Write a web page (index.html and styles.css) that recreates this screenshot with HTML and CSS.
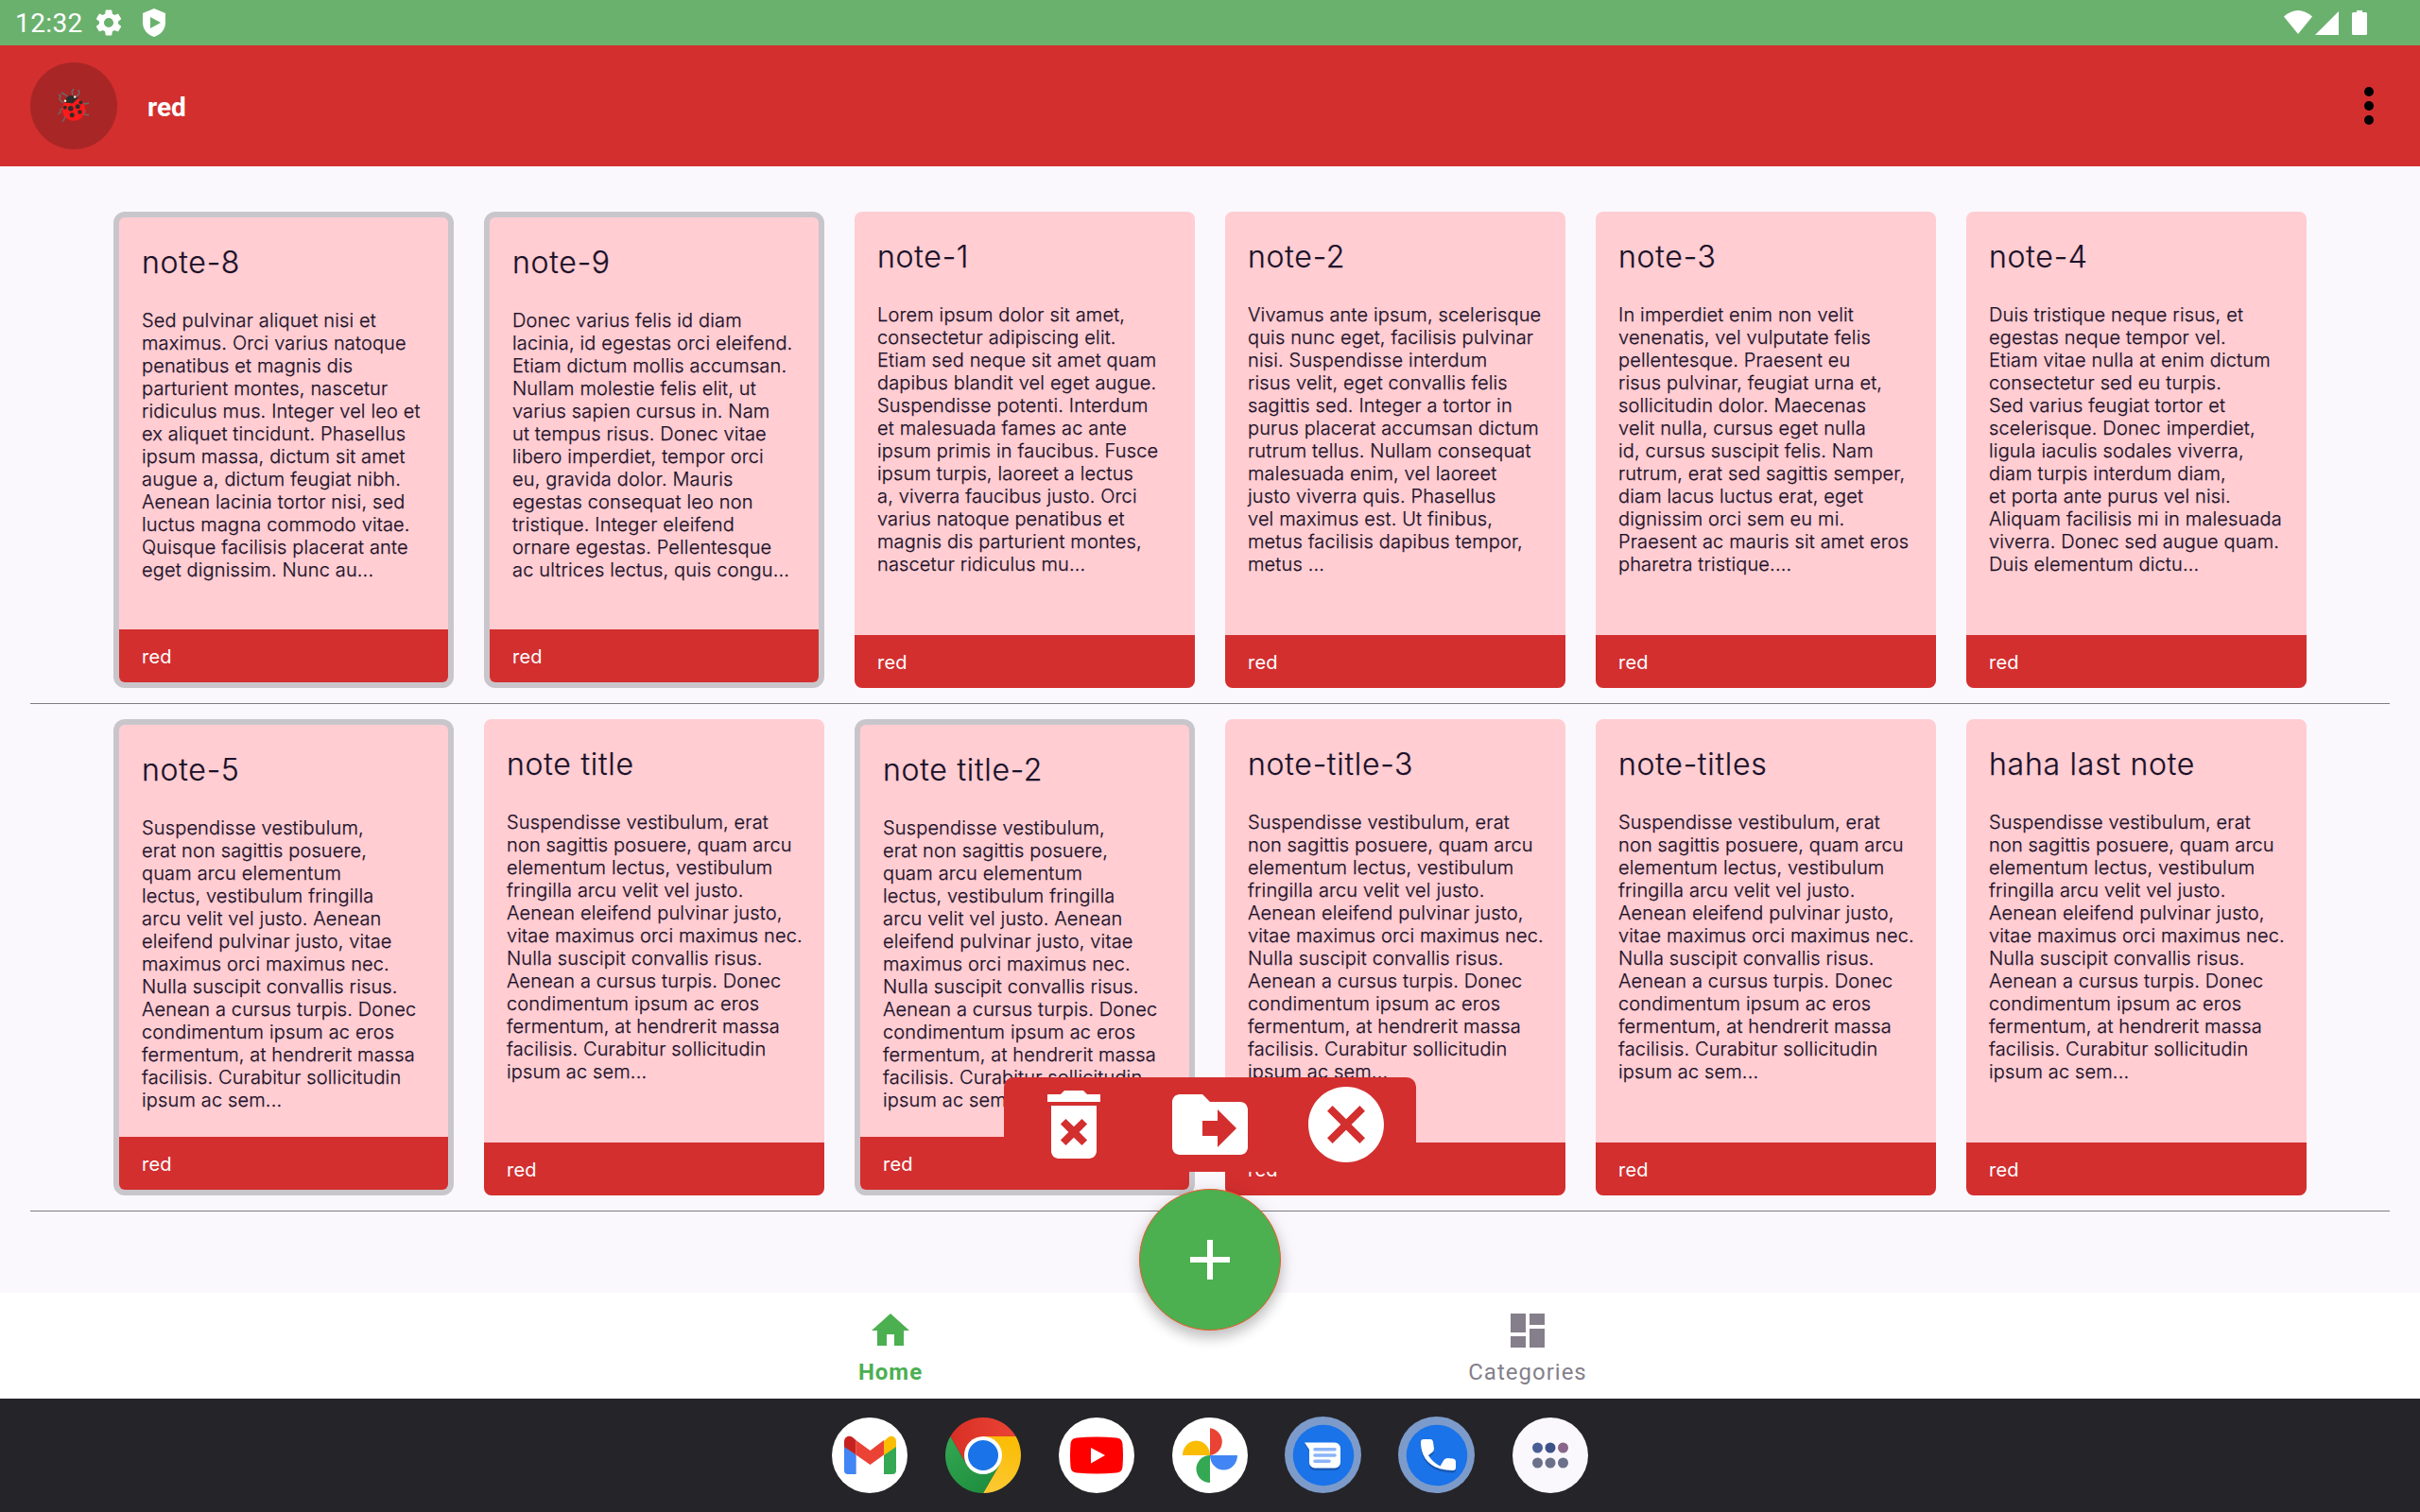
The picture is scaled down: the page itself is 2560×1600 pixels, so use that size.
FILE: index.html
```html
<!DOCTYPE html>
<html lang="en">
<head>
<meta charset="utf-8">
<title>Notes</title>
<link rel="stylesheet" href="styles.css">
</head>
<body>
<div class="screen">
  <div class="status">
    <span class="clock">12:32</span>
    <svg class="gear" viewBox="2 2 20 20"><path d="M19.14 12.94c.04-.3.06-.61.06-.94 0-.32-.02-.64-.07-.94l2.03-1.58a.49.49 0 0 0 .12-.61l-1.92-3.32a.49.49 0 0 0-.59-.22l-2.39.96c-.5-.38-1.03-.7-1.62-.94l-.36-2.54a.48.48 0 0 0-.48-.41h-3.84a.47.47 0 0 0-.47.41l-.36 2.54c-.59.24-1.13.57-1.62.94l-2.39-.96a.48.48 0 0 0-.59.22L2.74 8.87c-.12.21-.08.47.12.61l2.03 1.58c-.05.3-.09.63-.09.94s.02.64.07.94l-2.03 1.58a.49.49 0 0 0-.12.61l1.92 3.32c.12.22.37.29.59.22l2.39-.96c.5.38 1.03.7 1.62.94l.36 2.54c.05.24.24.41.48.41h3.84c.24 0 .44-.17.47-.41l.36-2.54c.59-.24 1.13-.56 1.62-.94l2.39.96c.22.08.47 0 .59-.22l1.92-3.32a.47.47 0 0 0-.12-.61zM12 15.6A3.6 3.6 0 1 1 12 8.4a3.6 3.6 0 0 1 0 7.2z"/></svg>
    <svg class="shield" viewBox="0 0 26 30"><path fill-rule="evenodd" d="M13 0 25 5v10c0 7-5 13-12 15C6 28 1 22 1 15V5zM9 9v12l11-6z"/></svg>
    <span class="spacer"></span>
    <svg class="wifi" viewBox="0 0 30 25"><path d="M0 6.500Q15-6.500 30 6.500L15 25z"/></svg>
    <svg class="signal" viewBox="0 0 25 25"><path d="M0 25 25 0v25z"/></svg>
    <svg class="battery" viewBox="0 0 16 26"><path d="M5 0h6v2h3.500a1.500 1.500 0 0 1 1.500 1.500v21a1.500 1.500 0 0 1-1.500 1.500h-13A1.500 1.500 0 0 1 0 24.500v-21A1.500 1.500 0 0 1 1.500 2H5z"/></svg>
  </div>
  <header class="appbar">
    <div class="avatar">
      <svg viewBox="0 0 34 36"><g fill="none" stroke="#6b6b6b" stroke-width="1.400"><path d="M11 9 8 6 4 4M16 7l-1-4 2-3M20 8l3-3-1-4M6 15l-4-4 1-4-2-1M6 20l-3 2v3l-3 2M7 26l1 4-3 5M26 15l3 1 4-1M27 20l2 3-1 4 5 1"/></g><circle cx="17" cy="21.800" r="12" fill="#ff1a1a"/><path d="M7.500 14.500C8 9 11 7 14.500 7c3.500 0 5.500 1 7 3l-5.500 5.500z" fill="#302b2b"/><g fill="#302b2b"><circle cx="7.800" cy="19.800" r="2"/><circle cx="13.800" cy="20.800" r="2.800"/><circle cx="21.200" cy="18.800" r="2.500"/><circle cx="24.400" cy="14.500" r="2"/><circle cx="15.200" cy="27.800" r="2.500"/><circle cx="23.500" cy="24.500" r="2.200"/></g><circle cx="8" cy="12.800" r="1.300" fill="#ffe9c9"/><circle cx="18.200" cy="8.500" r="1.300" fill="#ffe9c9"/></svg>
    </div>
    <h1>red</h1>
    <span class="spacer"></span>
    <div class="more"><i></i><i></i><i></i></div>
  </header>
  <main>
    <div class="row">
      <article class="card sel"><h2>note-8</h2><p>Sed pulvinar aliquet nisi et<br>maximus. Orci varius natoque<br>penatibus et magnis dis<br>parturient montes, nascetur<br>ridiculus mus. Integer vel leo et<br>ex aliquet tincidunt. Phasellus<br>ipsum massa, dictum sit amet<br>augue a, dictum feugiat nibh.<br>Aenean lacinia tortor nisi, sed<br>luctus magna commodo vitae.<br>Quisque facilisis placerat ante<br>eget dignissim. Nunc au...</p><footer>red</footer></article>
      <article class="card sel"><h2>note-9</h2><p>Donec varius felis id diam<br>lacinia, id egestas orci eleifend.<br>Etiam dictum mollis accumsan.<br>Nullam molestie felis elit, ut<br>varius sapien cursus in. Nam<br>ut tempus risus. Donec vitae<br>libero imperdiet, tempor orci<br>eu, gravida dolor. Mauris<br>egestas consequat leo non<br>tristique. Integer eleifend<br>ornare egestas. Pellentesque<br>ac ultrices lectus, quis congu...</p><footer>red</footer></article>
      <article class="card"><h2>note-1</h2><p>Lorem ipsum dolor sit amet,<br>consectetur adipiscing elit.<br>Etiam sed neque sit amet quam<br>dapibus blandit vel eget augue.<br>Suspendisse potenti. Interdum<br>et malesuada fames ac ante<br>ipsum primis in faucibus. Fusce<br>ipsum turpis, laoreet a lectus<br>a, viverra faucibus justo. Orci<br>varius natoque penatibus et<br>magnis dis parturient montes,<br>nascetur ridiculus mu...</p><footer>red</footer></article>
      <article class="card"><h2>note-2</h2><p>Vivamus ante ipsum, scelerisque<br>quis nunc eget, facilisis pulvinar<br>nisi. Suspendisse interdum<br>risus velit, eget convallis felis<br>sagittis sed. Integer a tortor in<br>purus placerat accumsan dictum<br>rutrum tellus. Nullam consequat<br>malesuada enim, vel laoreet<br>justo viverra quis. Phasellus<br>vel maximus est. Ut finibus,<br>metus facilisis dapibus tempor,<br>metus ...</p><footer>red</footer></article>
      <article class="card"><h2>note-3</h2><p>In imperdiet enim non velit<br>venenatis, vel vulputate felis<br>pellentesque. Praesent eu<br>risus pulvinar, feugiat urna et,<br>sollicitudin dolor. Maecenas<br>velit nulla, cursus eget nulla<br>id, cursus suscipit felis. Nam<br>rutrum, erat sed sagittis semper,<br>diam lacus luctus erat, eget<br>dignissim orci sem eu mi.<br>Praesent ac mauris sit amet eros<br>pharetra tristique....</p><footer>red</footer></article>
      <article class="card"><h2>note-4</h2><p>Duis tristique neque risus, et<br>egestas neque tempor vel.<br>Etiam vitae nulla at enim dictum<br>consectetur sed eu turpis.<br>Sed varius feugiat tortor et<br>scelerisque. Donec imperdiet,<br>ligula iaculis sodales viverra,<br>diam turpis interdum diam,<br>et porta ante purus vel nisi.<br>Aliquam facilisis mi in malesuada<br>viverra. Donec sed augue quam.<br>Duis elementum dictu...</p><footer>red</footer></article>
    </div>
    <div class="row">
      <article class="card sel"><h2>note-5</h2><p>Suspendisse vestibulum,<br>erat non sagittis posuere,<br>quam arcu elementum<br>lectus, vestibulum fringilla<br>arcu velit vel justo. Aenean<br>eleifend pulvinar justo, vitae<br>maximus orci maximus nec.<br>Nulla suscipit convallis risus.<br>Aenean a cursus turpis. Donec<br>condimentum ipsum ac eros<br>fermentum, at hendrerit massa<br>facilisis. Curabitur sollicitudin<br>ipsum ac sem...</p><footer>red</footer></article>
      <article class="card"><h2>note title</h2><p>Suspendisse vestibulum, erat<br>non sagittis posuere, quam arcu<br>elementum lectus, vestibulum<br>fringilla arcu velit vel justo.<br>Aenean eleifend pulvinar justo,<br>vitae maximus orci maximus nec.<br>Nulla suscipit convallis risus.<br>Aenean a cursus turpis. Donec<br>condimentum ipsum ac eros<br>fermentum, at hendrerit massa<br>facilisis. Curabitur sollicitudin<br>ipsum ac sem...</p><footer>red</footer></article>
      <article class="card sel"><h2>note title-2</h2><p>Suspendisse vestibulum,<br>erat non sagittis posuere,<br>quam arcu elementum<br>lectus, vestibulum fringilla<br>arcu velit vel justo. Aenean<br>eleifend pulvinar justo, vitae<br>maximus orci maximus nec.<br>Nulla suscipit convallis risus.<br>Aenean a cursus turpis. Donec<br>condimentum ipsum ac eros<br>fermentum, at hendrerit massa<br>facilisis. Curabitur sollicitudin<br>ipsum ac sem...</p><footer>red</footer></article>
      <article class="card"><h2>note-title-3</h2><p>Suspendisse vestibulum, erat<br>non sagittis posuere, quam arcu<br>elementum lectus, vestibulum<br>fringilla arcu velit vel justo.<br>Aenean eleifend pulvinar justo,<br>vitae maximus orci maximus nec.<br>Nulla suscipit convallis risus.<br>Aenean a cursus turpis. Donec<br>condimentum ipsum ac eros<br>fermentum, at hendrerit massa<br>facilisis. Curabitur sollicitudin<br>ipsum ac sem...</p><footer>red</footer></article>
      <article class="card"><h2>note-titles</h2><p>Suspendisse vestibulum, erat<br>non sagittis posuere, quam arcu<br>elementum lectus, vestibulum<br>fringilla arcu velit vel justo.<br>Aenean eleifend pulvinar justo,<br>vitae maximus orci maximus nec.<br>Nulla suscipit convallis risus.<br>Aenean a cursus turpis. Donec<br>condimentum ipsum ac eros<br>fermentum, at hendrerit massa<br>facilisis. Curabitur sollicitudin<br>ipsum ac sem...</p><footer>red</footer></article>
      <article class="card"><h2>haha last note</h2><p>Suspendisse vestibulum, erat<br>non sagittis posuere, quam arcu<br>elementum lectus, vestibulum<br>fringilla arcu velit vel justo.<br>Aenean eleifend pulvinar justo,<br>vitae maximus orci maximus nec.<br>Nulla suscipit convallis risus.<br>Aenean a cursus turpis. Donec<br>condimentum ipsum ac eros<br>fermentum, at hendrerit massa<br>facilisis. Curabitur sollicitudin<br>ipsum ac sem...</p><footer>red</footer></article>
    </div>
  </main>
  <nav class="tabs">
    <a class="tab active"><svg viewBox="0 0 24 24"><path d="M10 20v-6h4v6h5v-8h3L12 3 2 12h3v8z"/></svg><span>Home</span></a>
    <a class="tab"><svg viewBox="0 0 24 24"><path d="M3 13h8V3H3v10zm0 8h8v-6H3v6zm10 0h8V11h-8v10zm0-18v6h8V3h-8z"/></svg><span>Categories</span></a>
  </nav>
  <div class="dock">
    <svg viewBox="0 0 80 80"><circle cx="40" cy="40" r="40" fill="#fff"/><path d="M13 30l12.700 9.500V60H17a4 4 0 0 1-4-4z" fill="#4285f4"/><path d="M68 30l-13 9.500V60h9a4 4 0 0 0 4-4z" fill="#34a853"/><path d="M55 25l4-3.500c4-3.500 9-1 9 4V31l-13 9z" fill="#fbbc04"/><path d="M25.500 24 40.500 35 55 24v15.500L40.500 50l-15-10.500z" fill="#ea4335"/><path d="M13 31v-5.500c0-5 5-7.500 9-4.500l3.500 3v15.500z" fill="#c5221f"/></svg>
    <svg viewBox="0 0 80 80"><defs><linearGradient id="cr"><stop stop-color="#d93025"/><stop offset="1" stop-color="#ea4335"/></linearGradient><linearGradient id="cg" x1="0" y1="0" x2=".7" y2="1"><stop stop-color="#34a853"/><stop offset="1" stop-color="#1e8e3e"/></linearGradient><linearGradient id="cy" x1=".5" y1="0" x2=".3" y2="1"><stop stop-color="#fbbc04"/><stop offset="1" stop-color="#fcc934"/></linearGradient></defs><path d="M5.360 20A40 40 0 0 1 74.640 20H40L22.680 50z" fill="url(#cr)"/><path d="M74.640 20A40 40 0 0 1 40 80L57.320 50 40 20z" fill="url(#cy)"/><path d="M40 80A40 40 0 0 1 5.360 20L22.680 50 57.320 50z" fill="url(#cg)"/><circle cx="40" cy="40" r="20" fill="#fff"/><circle cx="40" cy="40" r="16" fill="#1a73e8"/></svg>
    <svg viewBox="0 0 80 80"><circle cx="40" cy="40" r="40" fill="#fff"/><path d="M19 21.500q21-2 42 0 6 .5 6.500 6.500 1 12 0 24-.5 6-6.500 6.500-21 2-42 0-6-.5-6.500-6.500-1-12 0-24 .5-6 6.500-6.500z" fill="red"/><path d="M34 32v16.500L49 40z" fill="#fff"/></svg>
    <svg viewBox="0 0 80 80"><circle cx="40" cy="40" r="40" fill="#fff"/><path d="M40 11.200a14.500 14.500 0 0 1 0 28.800z" fill="#ea4335"/><path d="M69 40a14.500 15.500 0 0 1-29 0z" fill="#4285f4"/><path d="M40 69a14.500 14.500 0 0 1 0-29z" fill="#34a853"/><path d="M11 40a14.500 15.500 0 0 1 29 0z" fill="#fbbc04"/></svg>
    <svg viewBox="0 0 80 80"><circle cx="39.500" cy="39.500" r="40.500" fill="#7c9bcb"/><circle cx="40" cy="40" r="32.300" fill="#1a73e8"/><path d="M20 28h32a6 6 0 0 1 6 6v16a6 6 0 0 1-6 6H31a6 6 0 0 1-6-6V36z" fill="#1859b5"/><path d="M20 26.500h32a6 6 0 0 1 6 6v15a6 6 0 0 1-6 6H31a6 6 0 0 1-6-6V34z" fill="#fff"/><path d="M31 33.700h21M31 40h21M31 46.300h15" stroke="#8ab4f8" stroke-width="3.600" stroke-linecap="round"/></svg>
    <svg viewBox="0 0 80 80"><circle cx="39.500" cy="39.500" r="40.500" fill="#7c9bcb"/><circle cx="40" cy="40" r="32.300" fill="#1a73e8"/><path transform="translate(0 2.500)" d="M23 26q0-3 3-3h7q2.500 0 3 3l1 7q0 2-1.500 3.500L31 40q4 7 12.500 11.500l3.500-6q1.500-2.500 4-2.500l6 .5q3 .5 3 3.500v6q0 3-3 3C37 56 23 46 23 26z" fill="#1859b5"/><path d="M23 26q0-3 3-3h7q2.500 0 3 3l1 7q0 2-1.500 3.500L31 40q4 7 12.500 11.500l3.500-6q1.500-2.500 4-2.500l6 .5q3 .5 3 3.500v6q0 3-3 3C37 56 23 46 23 26z" fill="#fff"/></svg>
    <svg viewBox="0 0 80 80"><circle cx="40" cy="40" r="40" fill="#faf8fd"/><circle cx="26.500" cy="32" r="5.500" fill="#4a5e96"/><circle cx="40" cy="32" r="5.500" fill="#3e5289"/><circle cx="53.500" cy="32" r="5.500" fill="#8a668a"/><g fill="#6b7189"><circle cx="26.500" cy="48" r="5.500"/><circle cx="40" cy="48" r="5.500"/><circle cx="53.500" cy="48" r="5.500"/></g></svg>
  </div>
  <div class="actions">
    <svg viewBox="0 0 24 24"><path d="M6 19c0 1.100.9 2 2 2h8c1.100 0 2-.9 2-2V7H6v12zm2.460-7.120 1.410-1.410L12 12.590l2.120-2.120 1.410 1.410L13.410 14l2.120 2.120-1.410 1.410L12 15.410l-2.120 2.120-1.410-1.410L10.590 14l-2.130-2.120zM15.500 4l-1-1h-5l-1 1H5v2h14V4z"/></svg>
    <svg viewBox="0 0 24 24"><path d="M20 6h-8l-2-2H4c-1.100 0-2 .9-2 2v12c0 1.100.9 2 2 2h16c1.100 0 2-.9 2-2V8c0-1.100-.9-2-2-2zm-6 12v-3h-4v-4h4V8l5 5-5 5z"/></svg>
    <svg viewBox="0 0 24 24"><path d="M12 2C6.470 2 2 6.470 2 12s4.470 10 10 10 10-4.470 10-10S17.530 2 12 2zm5 13.590L15.590 17 12 13.410 8.410 17 7 15.590 10.590 12 7 8.410 8.410 7 12 10.590 15.590 7 17 8.410 13.410 12 17 15.590z"/></svg>
  </div>
  <button class="fab"><svg viewBox="0 0 24 24"><path d="M19 13h-6v6h-2v-6H5v-2h6V5h2v6h6z"/></svg></button>
</div>
</body>
</html>
```
FILE: styles.css
```css
* { box-sizing: border-box; }
body { margin: 0; font-family: Roboto, "Liberation Sans", sans-serif; }
svg { display: block; flex: none; }
h1, h2, p { margin: 0; font-weight: 400; }
.screen { position: relative; width: 2560px; height: 1600px; display: flex; flex-direction: column; background: #faf8fd; overflow: hidden; }
.spacer { flex: 1; }
.status { height: 48px; background: #6bb16e; display: flex; align-items: flex-start; padding: 0 56px 0 16px; fill: #fff; color: #fff; }
.clock { width: 84px; font-size: 28px; line-height: 50px; letter-spacing: .4px; }
.gear { width: 28px; height: 28px; margin: 10px 21px 0 1px; }
.shield { width: 26px; height: 30px; margin-top: 9px; }
.wifi { width: 30px; height: 25px; margin-top: 11px; }
.signal { width: 25px; height: 25px; margin: 12px 14px 0 3px; }
.battery { width: 16px; height: 26px; margin-top: 11px; }
.appbar { height: 128px; background: #d32f2f; display: flex; align-items: center; padding: 0 49px 0 32px; }
.avatar { width: 92px; height: 92px; border-radius: 50%; background: #a92626; display: flex; align-items: center; justify-content: center; }
.avatar svg { width: 34px; height: 36px; }
.appbar h1 { margin: 3px 0 0 32px; font-size: 28px; font-weight: 700; line-height: 32px; color: #fff; }
.more { display: flex; flex-direction: column; gap: 5px; }
.more i { width: 10px; height: 10px; border-radius: 50%; background: #000; }
main { height: 1192px; padding: 48px 32px 0; }
.row { display: flex; gap: 32px; height: 521px; padding: 0 88px 16px; border-bottom: 1px solid #7f7c86; }
.row + .row { margin-top: 16px; }
.card { width: 360px; height: 504px; border-radius: 8px; background: #ffcdd2; overflow: hidden; display: flex; flex-direction: column; color: #1b1028; font-family: Inter, sans-serif; }
.card.sel { border: 6px solid #c9c6cb; border-radius: 12px; }
.card h2 { padding: 28px 24px 0; font-size: 32px; font-weight: 300; line-height: 40px; letter-spacing: .75px; white-space: nowrap; -webkit-text-stroke: .25px; }
.card p { padding: 29px 24px 0; flex: 1; font-weight: 300; font-size: 20px; line-height: 24px; letter-spacing: .15px; white-space: nowrap; -webkit-text-stroke: .25px; }
.card footer { height: 56px; flex: none; padding: 1px 0 0 24px; background: #d32f2f; color: #fff; font-size: 20px; line-height: 56px; letter-spacing: .2px; }
.tabs { height: 112px; background: #fff; display: flex; justify-content: center; padding: 16px 2px 0 0; color: #857f8b; }
.tab { width: 674px; display: flex; flex-direction: column; align-items: center; font-size: 24px; line-height: 28px; letter-spacing: 1px; gap: 6px; }
.tab svg { width: 48px; height: 48px; fill: currentColor; }
.tab.active { color: #4caf50; font-weight: 700; }
.dock { height: 120px; background: #252429; display: flex; justify-content: center; gap: 40px; padding-top: 20px; }
.dock svg { width: 80px; height: 80px; overflow: visible; }
.actions { position: absolute; left: 1062px; top: 1140px; width: 436px; height: 100px; display: flex; justify-content: center; align-items: center; gap: 48px; background: #d32f2f; border-radius: 10px 10px 0 0; fill: #fff; }
.actions svg { width: 96px; height: 96px; }
.fab { position: absolute; left: 1205px; top: 1258px; width: 150px; height: 150px; padding: 0; border: 1px solid #f0592b; border-radius: 50%; background: #4caf50; display: flex; align-items: center; justify-content: center; box-shadow: 0 8px 14px rgba(0,0,0,.2), 0 2px 20px rgba(0,0,0,.1); }
.fab svg { width: 72px; height: 72px; fill: #fff; }
```
